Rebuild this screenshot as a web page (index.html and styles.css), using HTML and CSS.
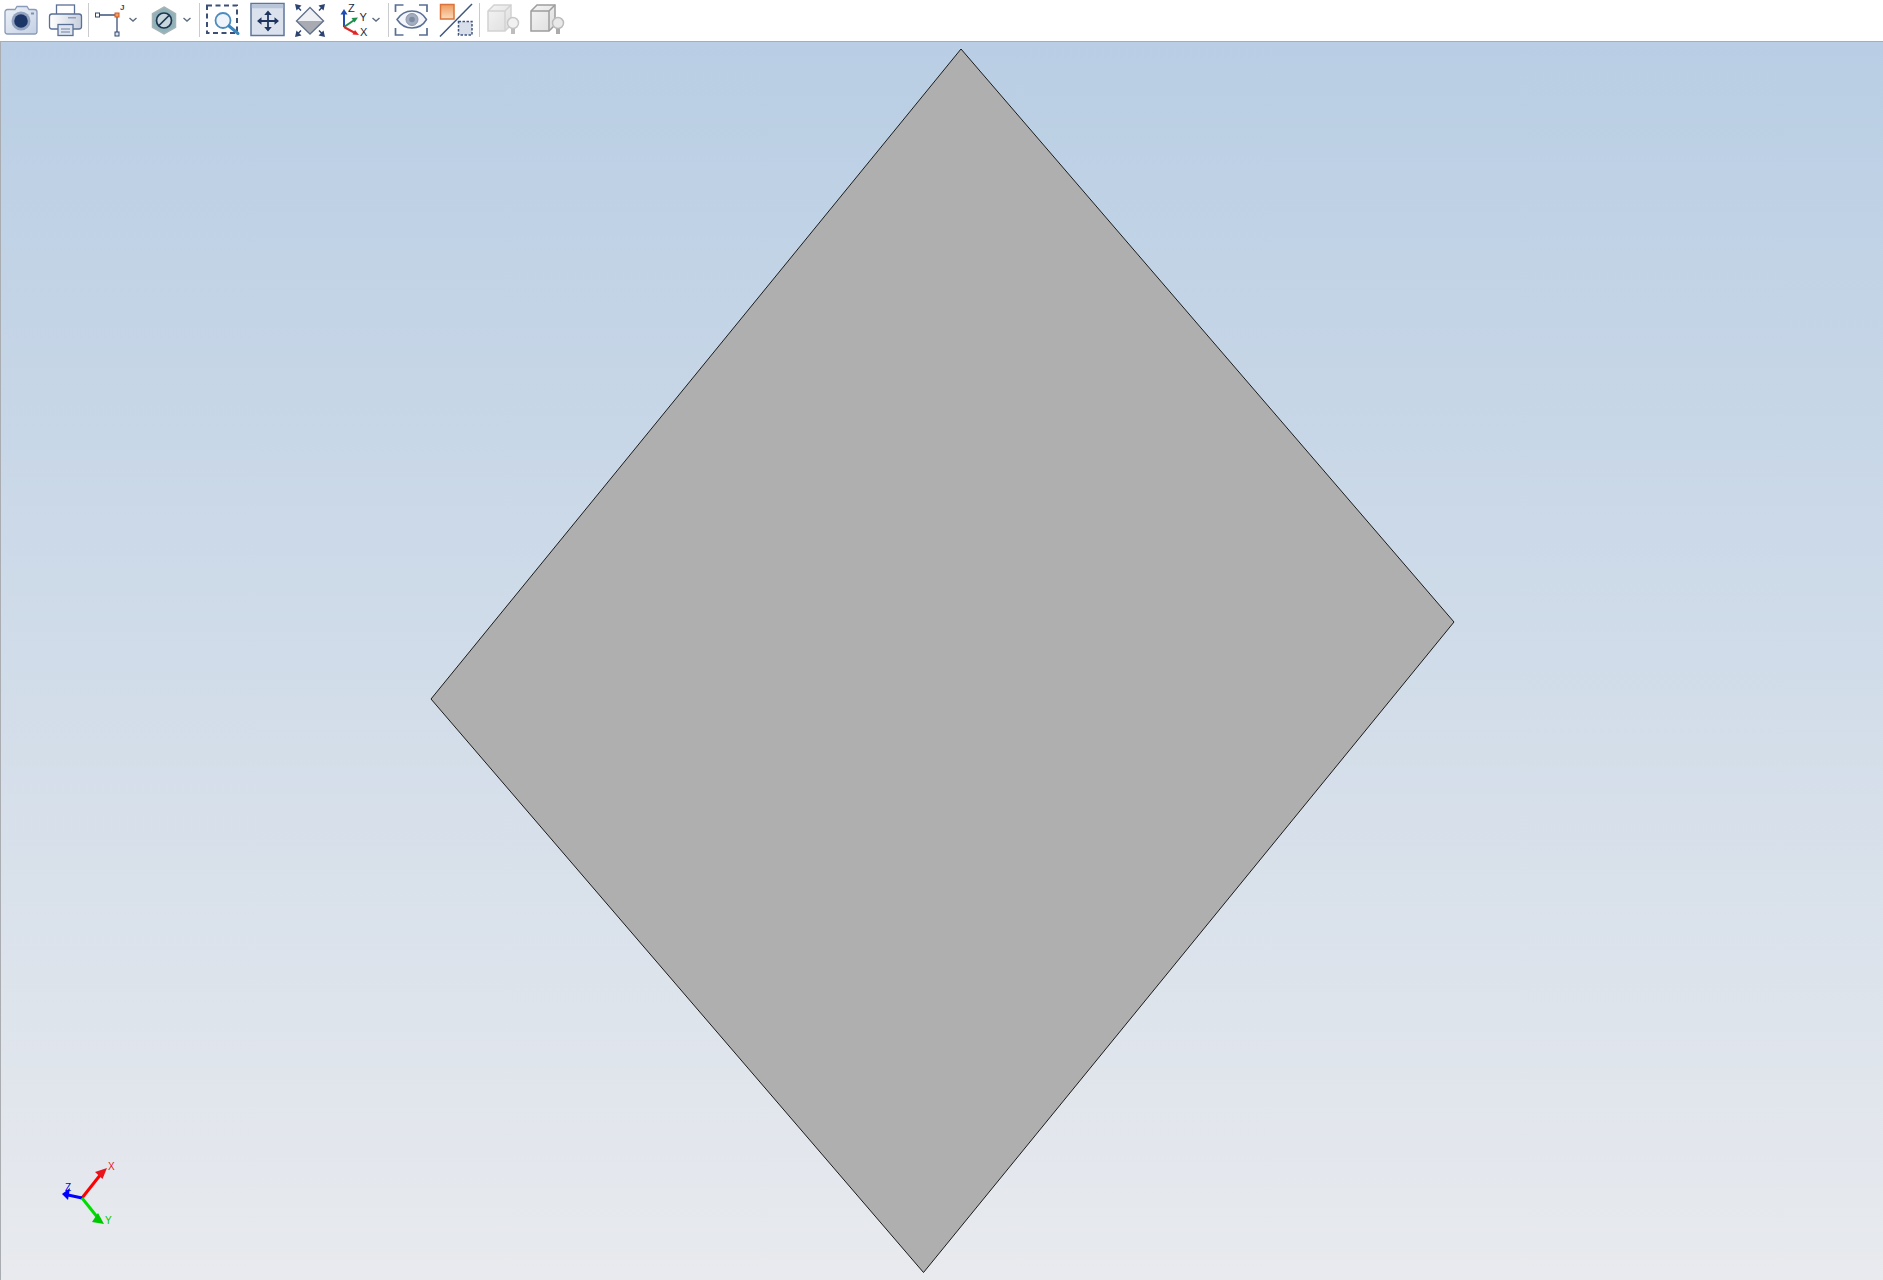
FILE: index.html
```html
<!DOCTYPE html>
<html lang="en">
<head>
<meta charset="utf-8">
<title>3D viewer</title>
<link rel="stylesheet" href="styles.css">
</head>
<body>
<div class="app">
  <header class="toolbar">
    <svg class="tool" width="44" height="41" viewBox="0 0 44 41">
      <defs>
        <linearGradient id="paleBlue" x1="0" y1="0" x2="1" y2="1"><stop offset="0" stop-color="#eef2f8"/><stop offset="1" stop-color="#c3d0e4"/></linearGradient>
        <linearGradient id="orange" x1="0" y1="0" x2="0" y2="1"><stop offset="0" stop-color="#ee9a5c"/><stop offset="1" stop-color="#fbdcbf"/></linearGradient>
        <linearGradient id="greyBody" x1="0" y1="0" x2="1" y2="0"><stop offset="0" stop-color="#ffffff"/><stop offset="1" stop-color="#c6cedd"/></linearGradient>
        <linearGradient id="cubeFace" x1="0" y1="0" x2="1" y2="1"><stop offset="0" stop-color="#f4f4f4"/><stop offset="1" stop-color="#dedede"/></linearGradient>
      </defs>
      <path d="M5 12a2.500 2.500 0 0 1 2.500-2.500H15l2-3h10l2 3h5.500A2.500 2.500 0 0 1 37 12v19.500a2.500 2.500 0 0 1-2.500 2.500h-27A2.500 2.500 0 0 1 5 31.500z" fill="url(#paleBlue)" stroke="#8a9bb9" stroke-width="1.300"/>
      <circle cx="21" cy="21" r="9.500" fill="#93a3bf"/>
      <circle cx="21" cy="21" r="6.800" fill="#1d3668"/>
      <rect x="31" y="12.500" width="3" height="2" fill="#7f90ae"/>
    </svg>
    <svg class="tool" width="44" height="41" viewBox="0 0 44 41">
      <rect x="12.500" y="5" width="18" height="11" fill="#fff" stroke="#5a7096" stroke-width="1.300"/>
      <rect x="5.500" y="14" width="32" height="15" rx="2.500" fill="url(#greyBody)" stroke="#5a7096" stroke-width="1.300"/>
      <rect x="24" y="17" width="8" height="1.500" fill="#8fa0bd"/>
      <rect x="14" y="24.500" width="15" height="11" fill="#dfe5ef" stroke="#5a7096" stroke-width="1.300"/>
      <path d="M17 29h9M17 32h9" stroke="#6d81a3" stroke-width="1.200"/>
    </svg>
    <span class="sep"></span>
    <svg class="tool" width="55" height="41" viewBox="0 0 55 41">
      <path d="M9 15h19v17" fill="none" stroke="#3e5278" stroke-width="1.300"/>
      <rect x="6.500" y="13" width="4" height="4" fill="#fff" stroke="#33476d"/>
      <rect x="26" y="32" width="4" height="4" fill="#dde3ee" stroke="#33476d"/>
      <rect x="26" y="13" width="4" height="4" fill="#f0a060" stroke="#d2551f"/>
      <text class="micro" x="31" y="10">J</text>
      <path class="chev" d="M40.500 18l3.500 3 3.500-3"/>
    </svg>
    <svg class="tool" width="55" height="41" viewBox="0 0 55 41">
      <path d="M20 7l11.500 6.800v13.400L20 34 8.500 27.200V13.800z" fill="#8fb3b8" stroke="#a7b3b6" stroke-width="1.500"/>
      <circle cx="20" cy="20.500" r="7.500" fill="#c7d7dc" stroke="#1e3550" stroke-width="1.700"/>
      <path d="M15 25.500L25 15.500" stroke="#1e3550" stroke-width="1.700"/>
      <path class="chev" d="M39.500 18l3.500 3 3.500-3"/>
    </svg>
    <span class="sep"></span>
    <svg class="tool" width="44" height="41" viewBox="0 0 44 41">
      <rect x="7" y="5.500" width="30" height="27.500" fill="none" stroke="#3c4f76" stroke-width="2" stroke-dasharray="5 3.500"/>
      <circle cx="23" cy="20.500" r="7.500" fill="#eef4fa" stroke="#4b8cc0" stroke-width="1.800"/>
      <path d="M29 26l9 7.500" stroke="#3d85bd" stroke-width="3" stroke-linecap="round"/>
    </svg>
    <svg class="tool" width="45" height="41" viewBox="0 0 45 41">
      <rect x="7" y="3.500" width="33" height="32" fill="#dbe2ee" stroke="#5f769c" stroke-width="1.500"/>
      <rect x="7.800" y="4.300" width="31.400" height="4" fill="#b9c6da"/>
      <path d="M24 14v14M17 21h14" stroke="#1f3560" stroke-width="1.800"/>
      <path d="M24 10.500l-3.800 4.500h7.600zM24 31.500l-3.800-4.500h7.600zM13 21l4.500-3.800v7.600zM35 21l-4.500-3.800v7.600z" fill="#1f3560"/>
    </svg>
    <svg class="tool" width="46" height="41" viewBox="0 0 46 41">
      <path d="M21 8.500L34 21H8z" fill="#eef0f3"/>
      <path d="M8 21h26L21 33.500z" fill="#a8acb2"/>
      <path d="M21 7.500L34.500 21 21 34 7.500 21z" fill="none" stroke="#62708c" stroke-width="1.400"/>
      <path d="M6 4l6.500 1.500L7.500 10.500zM36 4l-6.500 1.500 5 5zM6 37l6.500-1.500-5-5zM36 37l-6.500-1.500 5-5z" fill="#2c4472"/>
      <path d="M9 7.500l3 3M33 7.500l-3 3M9 33.500l3-3M33 33.500l-3-3" stroke="#2c4472" stroke-width="1.500"/>
    </svg>
    <svg class="tool" width="53" height="41" viewBox="0 0 53 41">
      <path d="M9 27V13" stroke="#1f4fb0" stroke-width="2"/>
      <path d="M9 9l-3.500 5.500h7z" fill="#1f4fb0"/>
      <path d="M9 27l11-7.500" stroke="#1d8f4c" stroke-width="2"/>
      <path d="M23 17.500l-6.500.5 3 4.500z" fill="#1d8f4c"/>
      <path d="M9 27l11 6" stroke="#e02727" stroke-width="2"/>
      <path d="M24 35l-6.500-.5 2.500-4.500z" fill="#e02727"/>
      <text class="axis-tag" x="13" y="12">Z</text>
      <text class="axis-tag" x="24.500" y="21">Y</text>
      <text class="axis-tag" x="25" y="36">X</text>
      <path class="chev" d="M37.500 18l3.500 3 3.500-3"/>
    </svg>
    <span class="sep"></span>
    <svg class="tool" width="44" height="41" viewBox="0 0 44 41">
      <path d="M6.500 12V5h8M30 5h8v7M6.500 28v7h8M30 35h8v-7" fill="none" stroke="#5a6d92" stroke-width="1.700"/>
      <path d="M8 19.500C12 13.500 17 11 23 11s11 2.500 14.500 8.500C34 25.500 29 28 23 28S12 25.500 8 19.500z" fill="#f3f5f9" stroke="#5a6e95" stroke-width="1.500"/>
      <circle cx="23" cy="19.500" r="6" fill="#a3adbf" stroke="#8c97ab"/>
      <circle cx="23" cy="19.500" r="2.800" fill="#7d8aa1"/>
    </svg>
    <svg class="tool" width="46" height="41" viewBox="0 0 46 41">
      <rect x="7.500" y="4.500" width="13.500" height="14.500" fill="url(#orange)" stroke="#d9743a" stroke-width="1.500"/>
      <path d="M7 36.500L39 4" stroke="#3f5680" stroke-width="1.500"/>
      <rect x="25.500" y="21.500" width="13.500" height="13.500" fill="#d8dfeb" stroke="#3f5680" stroke-width="1.500" stroke-dasharray="2.500 1.500"/>
    </svg>
    <span class="sep"></span>
    <svg class="tool" width="45" height="41" viewBox="0 0 45 41">
      <path d="M8 11l6-6h17v20l-6 6H8z" fill="url(#cubeFace)" stroke="#d2d2d2" stroke-width="1.500"/>
      <path d="M8 11h17v20M25 11l6-6" fill="none" stroke="#d2d2d2" stroke-width="1.500"/>
      <circle cx="33" cy="23" r="5.500" fill="#f1f1f1" stroke="#c8c8c8" stroke-width="1.500"/>
      <rect x="31" y="28.500" width="4" height="5.500" fill="#bdbdbd"/>
    </svg>
    <svg class="tool" width="45" height="41" viewBox="0 0 45 41">
      <path d="M6 11l6-6h18v20l-6 6H6z" fill="url(#cubeFace)" stroke="#9d9d9d" stroke-width="1.500"/>
      <path d="M6 11h18v20M24 11l6-6" fill="none" stroke="#9d9d9d" stroke-width="1.500"/>
      <circle cx="33" cy="23" r="5.500" fill="#e9e9e9" stroke="#bcbcbc" stroke-width="1.500"/>
      <rect x="31" y="28.500" width="4" height="5.500" fill="#ababab"/>
    </svg>
  </header>
  <main class="viewport">
    <svg class="scene" viewBox="1 42 1882 1238" preserveAspectRatio="none">
      <polygon class="solid" points="961,49 1454,622 923.500,1272.500 431,699"/>
      <g class="triad">
        <path d="M82 1198L101 1174" stroke="#ff0000" stroke-width="3"/>
        <path d="M107 1168l-12 4 7.500 7z" fill="#e8141e"/>
        <path d="M82 1198L68 1195" stroke="#0000ff" stroke-width="3"/>
        <path d="M62 1194l8-6-2 12z" fill="#0000ff"/>
        <path d="M82 1198L98 1218" stroke="#00dd00" stroke-width="3"/>
        <path d="M104 1224l-12-2 6-9z" fill="#00c800"/>
        <text class="triad-x" x="108" y="1170">X</text>
        <text class="triad-z" x="65" y="1191">Z</text>
        <text class="triad-y" x="105" y="1224">Y</text>
      </g>
    </svg>
  </main>
</div>
</body>
</html>
```
FILE: styles.css
```css
html, body {
  margin: 0;
  height: 100%;
  overflow: hidden;
}

body {
  font-family: "Liberation Sans", Arial, sans-serif;
  background: #fff;
}

.app {
  display: flex;
  flex-direction: column;
  height: 100vh;
}

.toolbar {
  display: flex;
  align-items: flex-start;
  flex: none;
  height: 41px;
  background: #fff;
  border-bottom: 1px solid #a9adb2;
}

.tool {
  display: block;
  flex: none;
}

.sep {
  flex: none;
  width: 1px;
  height: 34px;
  margin-top: 3px;
  background: #c9cbce;
}

.chev {
  fill: none;
  stroke: #5f6d80;
  stroke-width: 1.400;
}

.micro {
  font-size: 8px;
  font-weight: 700;
  fill: #33476d;
}

.axis-tag {
  font-size: 11px;
  fill: #1c2a44;
}

.viewport {
  position: relative;
  flex: 1;
  min-height: 0;
  border-left: 1px solid #a9adb2;
  background: linear-gradient(to bottom, #b9cee4 0%, #e8eaee 100%);
}

.scene {
  position: absolute;
  inset: 0;
  width: 100%;
  height: 100%;
  display: block;
}

.solid {
  fill: #afafaf;
  stroke: #1a1a1a;
  stroke-width: 1;
}

.triad text {
  font-size: 10px;
}

.triad-x {
  fill: #e8141e;
}

.triad-y {
  fill: #00c800;
}

.triad-z {
  fill: #0000ff;
}
```
